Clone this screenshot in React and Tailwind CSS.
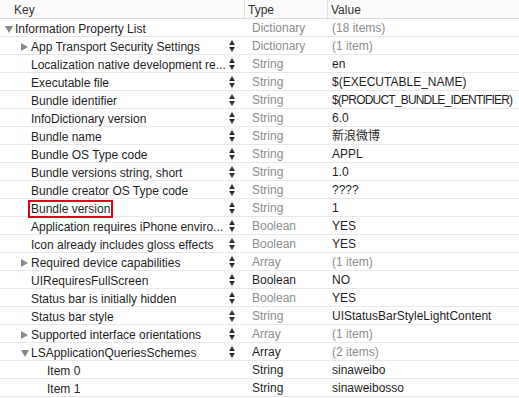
import React from 'react';

const rows = [
  { level: 0, toggle: 'open', key: 'Information Property List', type: 'Dictionary', value: '(18 items)', valueGrey: true, noStepper: true },
  { level: 1, toggle: 'closed', key: 'App Transport Security Settings', type: 'Dictionary', value: '(1 item)', valueGrey: true },
  { level: 1, key: 'Localization native development re...', type: 'String', value: 'en' },
  { level: 1, key: 'Executable file', type: 'String', value: '$(EXECUTABLE_NAME)' },
  { level: 1, key: 'Bundle identifier', type: 'String', value: '$(PRODUCT_BUNDLE_IDENTIFIER)', tight: true },
  { level: 1, key: 'InfoDictionary version', type: 'String', value: '6.0' },
  { level: 1, key: 'Bundle name', type: 'String', value: '新浪微博' },
  { level: 1, key: 'Bundle OS Type code', type: 'String', value: 'APPL' },
  { level: 1, key: 'Bundle versions string, short', type: 'String', value: '1.0' },
  { level: 1, key: 'Bundle creator OS Type code', type: 'String', value: '????' },
  { level: 1, key: 'Bundle version', type: 'String', value: '1', boxed: true },
  { level: 1, key: 'Application requires iPhone enviro...', type: 'Boolean', value: 'YES' },
  { level: 1, key: 'Icon already includes gloss effects', type: 'Boolean', value: 'YES' },
  { level: 1, toggle: 'closed', key: 'Required device capabilities', type: 'Array', value: '(1 item)', valueGrey: true },
  { level: 1, key: 'UIRequiresFullScreen', type: 'Boolean', typeDark: true, value: 'NO' },
  { level: 1, key: 'Status bar is initially hidden', type: 'Boolean', value: 'YES' },
  { level: 1, key: 'Status bar style', type: 'String', value: 'UIStatusBarStyleLightContent' },
  { level: 1, toggle: 'closed', key: 'Supported interface orientations', type: 'Array', value: '(1 item)', valueGrey: true },
  { level: 1, toggle: 'open', key: 'LSApplicationQueriesSchemes', type: 'Array', typeDark: true, value: '(2 items)', valueGrey: true },
  { level: 2, key: 'Item 0', type: 'String', typeDark: true, value: 'sinaweibo', noStepper: true },
  { level: 2, key: 'Item 1', type: 'String', typeDark: true, value: 'sinaweibosso', noStepper: true },
];

const indent = ['pl-[5px]', 'pl-[21px]', 'pl-[37px]'];

function Toggle({ kind }) {
  if (!kind) return <span className="w-[10px] shrink-0" />;
  return (
    <span className="w-[10px] shrink-0 flex items-center">
      {kind === 'open' ? (
        <svg width="8" height="7" viewBox="0 0 8 7"><path d="M0 0 H8 L4 7 Z" fill="#8a8a8a" /></svg>
      ) : (
        <svg width="7" height="8" viewBox="0 0 7 8"><path d="M0 0 L7 4 L0 8 Z" fill="#8a8a8a" /></svg>
      )}
    </span>
  );
}

function Stepper() {
  return (
    <span className="absolute left-[229px] top-[3px] flex flex-col gap-[2px]">
      <svg width="6" height="5" viewBox="0 0 6 5"><path d="M3 0 L6 5 H0 Z" fill="#333" /></svg>
      <svg width="6" height="5" viewBox="0 0 6 5"><path d="M0 0 H6 L3 5 Z" fill="#333" /></svg>
    </span>
  );
}

export default function App() {
  return (
    <div
      className="w-[519px] h-[398px] bg-white overflow-hidden text-[12px] text-[#1f1f1f]"
      style={{ fontFamily: '"Liberation Sans", "Noto Sans CJK SC", sans-serif' }}
    >
      <div className="grid grid-cols-[245px_83px_1fr] h-[19px] border-b border-[#dcdcdc] bg-[#fbfbfb] text-[#333]">
        <div className="pl-[14px] leading-[20px] border-r border-[#e2e2e2]">Key</div>
        <div className="pl-[3px] leading-[20px] border-r border-[#e2e2e2]">Type</div>
        <div className="pl-[3px] leading-[20px]">Value</div>
      </div>
      {rows.map((r, i) => (
        <div key={i} className="grid grid-cols-[245px_83px_1fr] h-[18px] border-b border-[#e8e8e8] leading-[19px]">
          <div className={`relative flex items-center pt-[1px] ${indent[r.level]}`}>
            <Toggle kind={r.toggle} />
            <span className={r.boxed ? 'border-2 border-[#e0001a] px-[1px] -ml-[3px] leading-[14px]' : 'leading-[14px]'}>{r.key}</span>
            {!r.noStepper && <Stepper />}
          </div>
          <div className={`pl-[7px] ${r.typeDark ? 'text-[#1f1f1f]' : 'text-[#8e8e8e]'}`}>{r.type}</div>
          <div
            className={`pl-[4px] whitespace-nowrap ${r.tight ? 'tracking-[-0.8px]' : ''} ${r.valueGrey ? 'text-[#8e8e8e]' : 'text-[#1f1f1f]'}`}
          >
            {r.value}
          </div>
        </div>
      ))}
    </div>
  );
}
